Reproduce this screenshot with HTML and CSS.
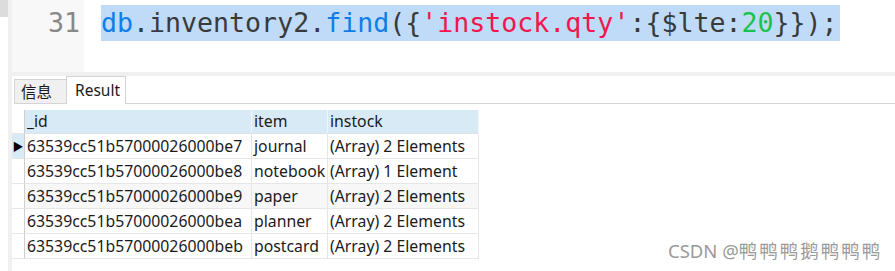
FILE: index.html
```html
<!DOCTYPE html>
<html lang="zh-CN">
<head>
    <meta charset="UTF-8">
    <title>Result</title>
    <link rel="stylesheet" href="styles.css">
</head>
<body>
    <div class="frame">
        <div class="side"><div class="side-top"></div></div>
        <div class="rail"></div>
        <div class="main">
            <div class="editor">
                <div class="gutter">31</div>
                <div class="code"><span class="sel"><span class="kw">db</span>.inventory2.<span class="kw">find</span>({<span class="str">'instock.qty'</span>:{$lte:<span class="num">20</span>}});</span></div>
            </div>
            <div class="splitter"></div>
            <div class="tabs">
                <div class="tab">信息</div>
                <div class="tab active">Result</div>
                <div class="tab-rest"></div>
            </div>
            <div class="grid">
                <div class="rh"></div>
                <div class="hd">_id</div>
                <div class="hd">item</div>
                <div class="hd">instock</div>

                <div class="rh current">&#9654;</div>
                <div class="cell">63539cc51b57000026000be7</div>
                <div class="cell">journal</div>
                <div class="cell">(Array) 2 Elements</div>

                <div class="rh"></div>
                <div class="cell">63539cc51b57000026000be8</div>
                <div class="cell">notebook</div>
                <div class="cell">(Array) 1 Element</div>

                <div class="rh"></div>
                <div class="cell alt">63539cc51b57000026000be9</div>
                <div class="cell alt">paper</div>
                <div class="cell alt">(Array) 2 Elements</div>

                <div class="rh"></div>
                <div class="cell">63539cc51b57000026000bea</div>
                <div class="cell">planner</div>
                <div class="cell">(Array) 2 Elements</div>

                <div class="rh"></div>
                <div class="cell">63539cc51b57000026000beb</div>
                <div class="cell">postcard</div>
                <div class="cell">(Array) 2 Elements</div>
            </div>
        </div>
    </div>
    <div class="watermark">CSDN @<span class="wm-name">鸭鸭鸭鹅鸭鸭鸭</span></div>
</body>
</html>
```

FILE: styles.css
```css
body {
    margin: 0;
    padding: 0;
    background-color: #ffffff;
    font-family: "Noto Sans", "Noto Sans CJK SC", sans-serif;
    color: #1a1a1a;
    overflow: hidden;
}

.frame {
    display: flex;
    width: 895px;
    height: 271px;
}

.side {
    width: 8px;
    background-color: #ffffff;
}

.side-top {
    height: 17px;
    background-color: #dcdcdc;
}

.rail {
    width: 4px;
    background-color: #f0f0f0;
}

.main {
    flex: 1;
    display: flex;
    flex-direction: column;
}

.editor {
    display: flex;
    height: 72px;
}

.gutter {
    width: 68px;
    padding-right: 4px;
    padding-top: 5px;
    background-color: #f8f8f8;
    color: #888888;
    text-align: right;
    font-family: "DejaVu Sans Mono", monospace;
    font-size: 26.6px;
    line-height: 36px;
}

.code {
    padding-left: 17px;
    padding-top: 5px;
    font-family: "DejaVu Sans Mono", monospace;
    font-size: 26.6px;
    line-height: 36px;
    color: #3a3a3a;
    white-space: pre;
}

.sel {
    display: inline-block;
    background-color: #bfdbf7;
    padding-right: 2px;
}

.kw {
    color: #0f7ee8;
}

.str {
    color: #f0174f;
}

.num {
    color: #19c24a;
}

.splitter {
    height: 4px;
    background-color: #f0f0f0;
}

.tabs {
    display: flex;
    align-items: flex-end;
    height: 28px;
    font-size: 15.5px;
}

.tab {
    box-sizing: border-box;
    height: 25px;
    margin-left: 2px;
    padding: 0 6px;
    width: 52px;
    background-color: #f0f0f0;
    border: 1px solid #d4d4d4;
    border-right: none;
    line-height: 24px;
}

.tab.active {
    height: 28px;
    width: 60px;
    margin-left: 0;
    padding: 0 8px;
    background-color: #ffffff;
    border: 1px solid #d4d4d4;
    border-bottom: none;
    line-height: 26px;
}

.tab-rest {
    flex: 1;
    height: 0;
    border-bottom: 1px solid #d4d4d4;
}

.grid {
    display: grid;
    grid-template-columns: 13px 227px 76px 151px;
    grid-template-rows: 24px repeat(5, 25px);
    margin-top: 6px;
    font-size: 15.8px;
}

.grid > div {
    box-sizing: border-box;
    border-bottom: 1px solid #e6e6e6;
    border-right: 1px solid #e6e6e6;
    white-space: nowrap;
    overflow: hidden;
    line-height: 24px;
}

.grid .rh {
    border-right-color: #cfcfcf;
    font-size: 11px;
    color: #000000;
    text-align: center;
}

.grid .rh.current {
    background-color: #d9eaf7;
    line-height: 25px;
}

.grid .hd {
    background-color: #d9eaf7;
    border-right-color: #f2f7fc;
    border-bottom-color: #dfe3e8;
    padding-left: 2px;
    line-height: 23px;
}

.grid .cell {
    padding-left: 2px;
}

.grid .cell.alt {
    background-color: #f7f7f7;
}

.watermark {
    position: absolute;
    left: 668px;
    top: 237px;
    font-family: "Noto Sans", "Noto Sans CJK SC", sans-serif;
    font-size: 18.5px;
    color: #9a9a9a;
    text-shadow: 1px 1px 1px #ffffff;
}

.wm-name {
    letter-spacing: 2px;
}
```
